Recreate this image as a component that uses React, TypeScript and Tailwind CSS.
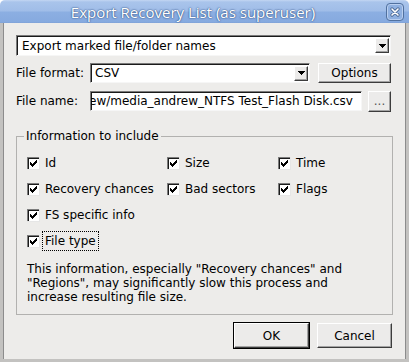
import React from "react";

function Check() {
  const cols: [number, number][] = [
    [3, 5], [4, 6], [5, 7], [6, 6], [7, 5], [8, 4], [9, 3],
  ];
  return (
    <svg width="13" height="13" viewBox="0 0 13 13" className="shrink-0 block" shapeRendering="crispEdges">
      <rect x="0" y="0" width="13" height="13" fill="#ffffff" />
      <rect x="0" y="0" width="13" height="1" fill="#7c7c7c" />
      <rect x="0" y="0" width="1" height="13" fill="#7c7c7c" />
      <rect x="1" y="1" width="11" height="1" fill="#1a1a1a" />
      <rect x="1" y="1" width="1" height="11" fill="#1a1a1a" />
      <rect x="12" y="0" width="1" height="13" fill="#e6e6e6" />
      <rect x="0" y="12" width="13" height="1" fill="#e6e6e6" />
      {cols.map(([x, y]) => (
        <rect key={x} x={x} y={y} width="1" height="3" fill="#000" />
      ))}
    </svg>
  );
}

function Arrow() {
  return (
    <div className="w-[14px] h-[15px] shrink-0 flex items-center justify-center bg-[#ecebea] border border-t-white border-l-white border-b-[#3c3c3c] border-r-[#3c3c3c] shadow-[inset_-1px_-1px_0_#a0a0a0]">
      <svg width="7" height="4" viewBox="0 0 7 4" shapeRendering="crispEdges">
        <rect x="0" y="0" width="7" height="1" fill="#000" />
        <rect x="1" y="1" width="5" height="1" fill="#000" />
        <rect x="2" y="2" width="3" height="1" fill="#000" />
        <rect x="3" y="3" width="1" height="1" fill="#000" />
      </svg>
    </div>
  );
}

function Field({ className, children }: { className?: string; children?: React.ReactNode }) {
  return (
    <div
      className={
        "flex items-center bg-white border border-t-[#7a7a7a] border-l-[#7a7a7a] border-b-[#f6f6f6] border-r-[#f6f6f6] shadow-[inset_1px_1px_0_#1a1a1a] overflow-hidden whitespace-nowrap " +
        (className ?? "")
      }
    >
      {children}
    </div>
  );
}

function Button({ className, children }: { className?: string; children?: React.ReactNode }) {
  return (
    <div
      className={
        "flex items-center justify-center bg-[#ecebea] border border-t-white border-l-white border-b-[#3c3c3c] border-r-[#3c3c3c] shadow-[inset_-1px_-1px_0_#a3a3a3] " +
        (className ?? "")
      }
    >
      {children}
    </div>
  );
}

function Item({ label, focus }: { label: string; focus?: boolean }) {
  return (
    <div className="flex items-center h-[26px]">
      <Check />
      {focus ? (
        <span className="ml-[2px] px-[2px] py-[2px] border border-dotted border-black">{label}</span>
      ) : (
        <span className="ml-[5px]">{label}</span>
      )}
    </div>
  );
}

export default function App() {
  return (
    <div className="w-[409px] h-[362px] flex flex-col bg-white font-['DejaVu_Sans',sans-serif] text-[12px] leading-[14px] text-black overflow-hidden">
      {/* Title bar */}
      <div className="h-[23px] shrink-0 flex items-center rounded-t-[5px] bg-[linear-gradient(#c3d6f2_0px,#a9c4eb_2px,#a0bde8_11px,#8cafe2_12px,#86aadf_22px,#7d9fd4_23px)]">
        <div className="flex-1 text-center font-['Open_Sans',sans-serif] text-[15px] leading-[20px] text-white [text-shadow:0_0_2px_#2f4f80,0_0_1px_#2f4f80]">
          Export Recovery List (as superuser)
        </div>
        <div className="mr-[5px] w-[18px] h-[18px] flex items-center justify-center rounded-[4px] border border-[#51719f] bg-[#8fb0e0] shadow-[inset_0_0_0_1px_#b9cff0]">
          <svg width="10" height="10" viewBox="0 0 10 10">
            <path d="M2 2L8 8M8 2L2 8" stroke="#4d6a96" strokeWidth="3.2" strokeLinecap="round" />
            <path d="M2 2L8 8M8 2L2 8" stroke="#ffffff" strokeWidth="1.6" strokeLinecap="round" />
          </svg>
        </div>
      </div>

      {/* Body */}
      <div className="flex-1 flex flex-col bg-[#edecea] border-x-[3px] border-b-[3px] border-[#c3c2c0] shadow-[inset_1px_0_0_#8c8c8c,inset_-1px_0_0_#8c8c8c] pl-[13px] pr-[15px] pt-[12px]">
        <Field className="h-[21px] pl-[5px] pr-[1px]">
          <span className="flex-1">Export marked file/folder names</span>
          <Arrow />
        </Field>

        <div className="mt-[7px] flex items-center h-[20px]">
          <span className="w-[74px] shrink-0">File format:</span>
          <Field className="w-[220px] h-[20px] pl-[4px] pr-[1px]">
            <span className="flex-1">CSV</span>
            <Arrow />
          </Field>
          <Button className="ml-auto w-[73px] h-[20px]">Options</Button>
        </div>

        <div className="mt-[8px] flex items-center h-[20px]">
          <span className="w-[74px] shrink-0">File name:</span>
          <Field className="w-[272px] h-[20px]">
            <span className="ml-[-2px]">ew/media_andrew_NTFS Test_Flash Disk.csv</span>
          </Field>
          <Button className="ml-auto w-[23px] h-[21px] text-[#555]">...</Button>
        </div>

        <fieldset className="mt-[18px] mr-[-2px] p-0 m-0 border border-[#b2b1af] pb-[10px]">
          <legend className="ml-[7px] px-[2px] leading-[14px]">Information to include</legend>
          <div className="pt-[7px] pl-[10px] grid grid-cols-[140px_111px_auto]">
            <Item label="Id" />
            <Item label="Size" />
            <Item label="Time" />
            <Item label="Recovery chances" />
            <Item label="Bad sectors" />
            <Item label="Flags" />
            <div className="col-span-3">
              <Item label="FS specific info" />
            </div>
            <div className="col-span-3">
              <Item label="File type" focus />
            </div>
          </div>
          <p className="mt-[8px] pl-[10px] leading-[14px]">
            This information, especially "Recovery chances" and
            <br />
            "Regions", may significantly slow this process and
            <br />
            increase resulting file size.
          </p>
        </fieldset>

        <div className="mt-[7px] mr-[-1px] flex items-center justify-end gap-[7px]">
          <div className="border border-black">
            <Button className="w-[75px] h-[25px]">OK</Button>
          </div>
          <Button className="w-[75px] h-[25px]">Cancel</Button>
        </div>
      </div>
    </div>
  );
}
